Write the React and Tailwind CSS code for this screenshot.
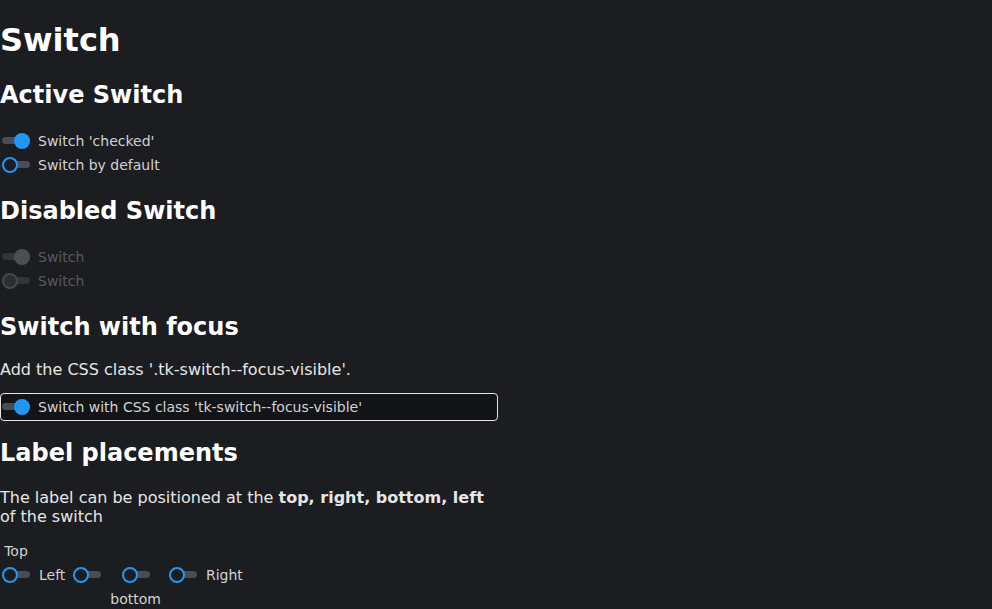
import React from "react";

function Toggle({ checked = false, disabled = false }) {
  const track = disabled ? "bg-[#33353a]" : "bg-[#4a4d55]";
  let knob;
  if (disabled) {
    knob = checked
      ? "left-[14px] bg-[#4b4e55]"
      : "left-[2px] bg-[#2c2e33] border-2 border-[#45484f]";
  } else {
    knob = checked
      ? "left-[14px] bg-[#2196f3]"
      : "left-[2px] bg-[#1c1d20] border-2 border-[#2196f3]";
  }
  return (
    <span className="relative inline-block w-[32px] h-[24px] shrink-0">
      <span className={"absolute left-[2px] top-[8px] w-[28px] h-[7px] rounded-full " + track} />
      <span className={"absolute top-[4px] w-4 h-4 rounded-full " + knob} />
    </span>
  );
}

function Row({ checked, disabled, label }) {
  return (
    <div className="flex items-center h-[24px] gap-[6px]">
      <Toggle checked={checked} disabled={disabled} />
      <span className={"text-[14px] leading-[24px] " + (disabled ? "text-[#56595f]" : "text-[#d2d2d2]")}>
        {label}
      </span>
    </div>
  );
}

export default function App() {
  const h2 = "text-[24px] leading-[28px] font-bold text-white";
  return (
    <div className="min-h-screen bg-[#1c1d20] text-white font-['DejaVu_Sans',sans-serif] pt-[21px]">
      <h1 className="text-[32px] leading-[38px] font-bold">Switch</h1>

      <h2 className={h2 + " mt-[22px] mb-[20px]"}>Active Switch</h2>
      <Row checked label="Switch 'checked'" />
      <Row label="Switch by default" />

      <h2 className={h2 + " mt-[20px] mb-[20px]"}>Disabled Switch</h2>
      <Row checked disabled label="Switch" />
      <Row disabled label="Switch" />

      <h2 className={h2 + " mt-[20px]"}>Switch with focus</h2>
      <p className="mt-[20px] text-[16px] leading-[18.6px] text-[#e6e6e6]">
        Add the CSS class '.tk-switch--focus-visible'.
      </p>
      <div className="relative mt-[15px] w-[498px]">
        <div className="absolute left-0 right-0 top-[-2px] bottom-[-2px] rounded-[4px] border border-[#e4e4e4] bg-[#131417]" />
        <div className="relative">
          <Row checked label="Switch with CSS class 'tk-switch--focus-visible'" />
        </div>
      </div>

      <h2 className={h2 + " mt-[20px]"}>Label placements</h2>
      <p className="mt-[21px] mb-[13px] w-[498px] text-[16px] leading-[19px] text-[#e6e6e6]">
        The label can be positioned at the <b>top, right, bottom, left</b> of the switch
      </p>

      <div className="flex items-start gap-[6px] text-[14px] text-[#d2d2d2]">
        <div className="flex flex-col items-center">
          <span className="leading-[24px]">Top</span>
          <Toggle />
        </div>
        <div className="flex items-center gap-[6px] mt-[24px] ml-[1px]">
          <span className="leading-[24px]">Left</span>
          <Toggle />
        </div>
        <div className="flex flex-col items-center mt-[24px] ml-[1px]">
          <Toggle />
          <span className="leading-[24px]">bottom</span>
        </div>
        <div className="flex items-center gap-[7px] mt-[24px]">
          <Toggle />
          <span className="leading-[24px]">Right</span>
        </div>
      </div>
    </div>
  );
}
